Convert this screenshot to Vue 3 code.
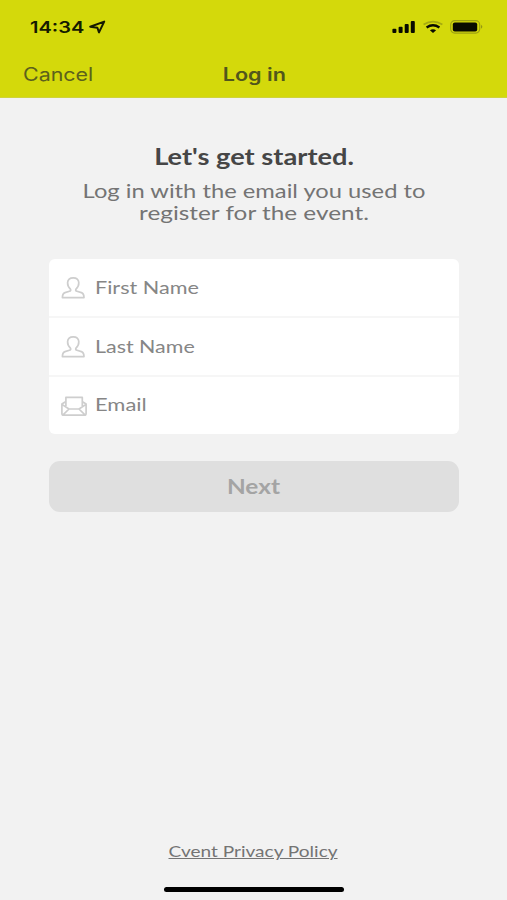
<script setup>
const fields = [
  { label: 'First Name', icon: 'person', cls: 'first' },
  { label: 'Last Name', icon: 'person', cls: 'last' },
  { label: 'Email', icon: 'mail', cls: 'email' },
]
</script>

<template>
  <div class="screen">
    <header class="header">
      <div class="status">
        <div class="clock">
          <span class="time">14:34</span>
          <svg class="arrow" width="17" height="14" viewBox="0 0 17 14">
            <path d="M1.2 6.7L15.2 1.6L10 12.4L8.4 7.7Z" fill="none" stroke="#151a00" stroke-width="2" stroke-linejoin="round" />
          </svg>
        </div>
        <div class="indicators">
          <svg width="24" height="14" viewBox="0 0 24 14" fill="#090b00">
            <rect x="0.4" y="8.8" width="4" height="4.2" rx="1" />
            <rect x="6.6" y="6.8" width="4" height="6.2" rx="1" />
            <rect x="12.7" y="4" width="4" height="9" rx="1" />
            <rect x="18.8" y="1" width="4" height="12" rx="1" />
          </svg>
          <svg width="20" height="14" viewBox="0 0 20 14" fill="none">
            <path d="M0.6 4.4Q10 -1.2 19.4 4.4" stroke="#a5aa10" stroke-width="1.7" />
            <path d="M3.6 7.5Q10 3 16.4 7.5" stroke="#090b00" stroke-width="2.4" />
            <path d="M6.9 10.3Q10 8 13.1 10.3L10 13Z" fill="#090b00" />
          </svg>
          <svg width="34" height="14" viewBox="0 0 34 14">
            <rect x="0.7" y="0.7" width="29" height="12.4" rx="4" fill="none" stroke="#9da213" stroke-width="1.2" />
            <rect x="2.8" y="2.6" width="24.4" height="8.8" rx="2" fill="#090b00" />
            <path d="M31.2 4.8Q33.4 6.8 31.2 8.8Z" fill="#868b16" />
          </svg>
        </div>
      </div>
      <nav class="nav">
        <span class="cancel">Cancel</span>
        <span class="title">Log in</span>
      </nav>
    </header>

    <main class="content">
      <h1><span>Let's get started.</span></h1>
      <p><span class="line-a">Log in with the email you used to</span><span class="line-b">register for the event.</span></p>
      <div class="fields">
        <div v-for="f in fields" :key="f.label" class="field">
          <svg v-if="f.icon === 'person'" class="icon" width="26" height="24" viewBox="0 0 26 24">
            <path d="M9.6 13.4C7.5 11.4 6.5 9 6.6 6.6C6.8 3.6 9 1.8 12.2 1.8S17.6 3.6 17.8 6.6C17.9 9 16.9 11.4 14.8 13.4C14.5 14.4 15 15 16 15.3L20.4 16.6C22.4 17.3 23 19 23 21.6H1.4C1.4 19 2 17.3 4 16.6L8.4 15.3C9.4 15 9.9 14.4 9.6 13.4Z" />
          </svg>
          <svg v-else class="icon" width="26" height="24" viewBox="0 0 26 24">
            <path d="M4.9 12V3.4H21.3V12M4.5 7.8L0.9 10V19.5Q0.9 21.2 2.6 21.2H23.4Q25.1 21.2 25.1 19.5V10L21.5 7.8M0.9 10.4L8 15H18L25.1 10.4M8 15L2 20.8M18 15L24 20.8" />
          </svg>
          <span :class="['label', f.cls]">{{ f.label }}</span>
        </div>
      </div>
      <button class="next"><span>Next</span></button>
    </main>

    <footer class="footer">
      <a class="privacy">Cvent Privacy Policy</a>
      <div class="home"></div>
    </footer>
  </div>
</template>

<style>
body { margin: 0; background: #f2f2f2; }
</style>

<style scoped>
.screen {
  width: 507px; height: 900px; box-sizing: border-box; overflow: hidden;
  display: flex; flex-direction: column;
  background: #f2f2f2; font-family: Lato, sans-serif; color: #747474;
}
.header {
  height: 98px; box-sizing: border-box; flex: none;
  background: #d4d90b; border-bottom: 1px solid #cfd33c;
  font-family: Inter, sans-serif;
}
.status {
  height: 54px; box-sizing: border-box; padding: 17px 23px 0 30px;
  display: flex; justify-content: space-between; align-items: flex-start;
}
.clock { display: flex; height: 20px; align-items: center; }
.time {
  width: 59px; font-size: 16px; font-weight: 600; line-height: 20px; color: #151a00;
  transform: scaleX(1.25); transform-origin: left;
}
.indicators { display: flex; gap: 7px; padding-top: 3px; }
.nav {
  height: 40px; display: grid; grid-template-columns: 1fr auto 1fr; align-items: center;
  padding: 0 22px 0 23px; font-size: 18px; color: #5c611c;
}
.cancel { justify-self: start; transform: scaleX(1.19); transform-origin: left; }
.title { font-weight: 600; transform: scaleX(1.2); color: #51561c; }
.content { padding: 45px 48px 0 49px; display: flex; flex-direction: column; flex: 1; }
h1 { margin: 0; font-size: 22px; line-height: 28px; font-weight: 700; color: #464646; text-align: center; }
h1 span { display: block; transform: scaleX(1.237); }
p { margin: 8px 0 0; font-size: 20px; line-height: 22px; text-align: center; }
.line-a { display: block; transform: scaleX(1.187); }
.line-b { display: block; transform: scaleX(1.217); }
.fields {
  margin-top: 36px; background: #fff; border-radius: 6px; overflow: hidden;
  display: grid; grid-template-rows: 59px 59px 57px;
}
.field {
  box-sizing: border-box; display: flex; align-items: center;
  padding-left: 12px; gap: 8px;
}
.field:not(:last-child) { border-bottom: 2px solid #f6f6f6; }
.icon { fill: none; stroke: #cecece; stroke-width: 1.7; stroke-linejoin: round; }
.label {
  padding-bottom: 1px; font-size: 18px; line-height: 24px; color: #868686;
  transform: scaleX(1.2); transform-origin: left;
}
.last { transform: scaleX(1.19); }
.email { padding-bottom: 3px; transform: scaleX(1.22); }
.next {
  margin-top: 27px; height: 51px; border: 0; border-radius: 11px; padding: 0 1px 2px 0;
  background: #dfdfdf; color: #a4a4a4; font: 700 20px Lato, sans-serif;
}
.next span { display: block; transform: scaleX(1.22); }
.footer { display: flex; flex-direction: column; align-items: center; padding-bottom: 8px; }
.privacy { font-size: 16px; line-height: 20px; text-decoration: underline; transform: scaleX(1.19); }
.home { margin-top: 26px; width: 180px; height: 5px; border-radius: 3px; background: #000; }
</style>
